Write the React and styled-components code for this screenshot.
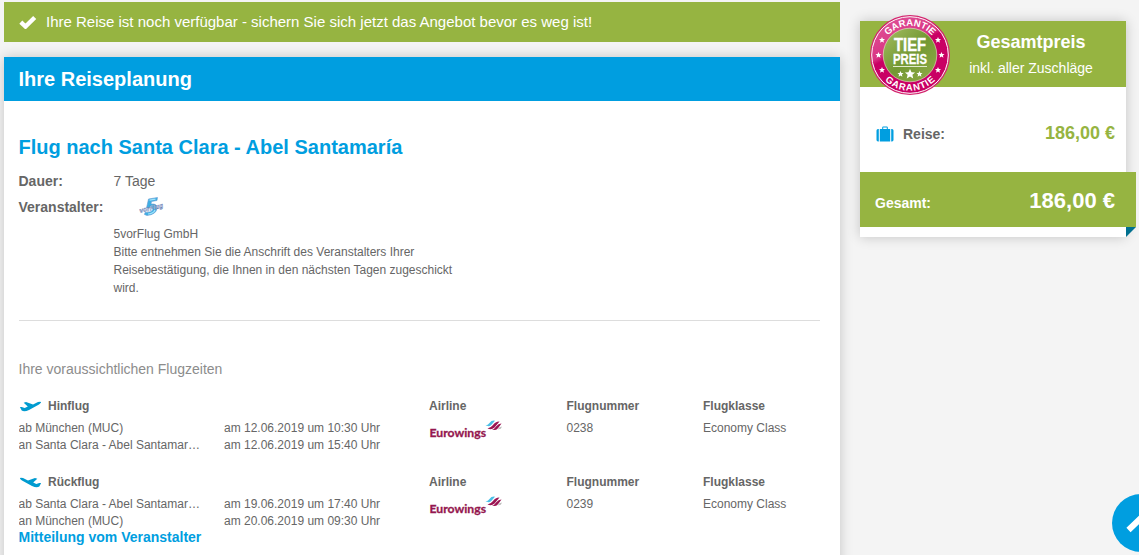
import React from 'react';
import styled, { createGlobalStyle } from 'styled-components';

const GlobalStyle = createGlobalStyle`
    body {
        background: #f4f4f4;
        color: #666;
        font-family: "Liberation Sans", Arial, sans-serif;
        margin: 0;
        overflow: hidden;
    }
`;

const Page = styled.div`
    align-items: flex-start;
    box-sizing: border-box;
    display: flex;
    gap: 20px;
    height: 555px;
    overflow: hidden;
    padding: 2px 0 0 4px;
`;

const Main = styled.main`
    width: 836px;
`;

const Notice = styled.div`
    align-items: center;
    background: #96b441;
    box-sizing: border-box;
    color: #fff;
    display: flex;
    font-size: 15px;
    gap: 9px;
    height: 40px;
    margin-bottom: 15px;
    padding: 0 0 1px 15px;
`;

const Panel = styled.section`
    background: #fff;
    box-shadow: 0 0 12px rgba(0, 0, 0, .2);
    height: 560px;
`;

const PanelTitle = styled.h1`
    background: #009ee0;
    color: #fff;
    font-size: 20px;
    line-height: 44px;
    margin: 0;
    padding-left: 14.5px;
`;

const PanelBody = styled.div`
    padding: 34px 20px 0 14.5px;
`;

const TripTitle = styled.h2`
    color: #009ee0;
    font-size: 20px;
    line-height: 24px;
    margin: 0 0 9px;
`;

const Detail = styled.div`
    display: grid;
    font-size: 14px;
    grid-template-columns: 95px 1fr;
    line-height: 26px;
`;

const Label = styled.strong`
    white-space: nowrap;
`;

const LogoBox = styled.div`
    box-sizing: border-box;
    height: 26px;
    padding: 2px 0 0 25px;

    svg {
        display: block;
    }
`;

const Address = styled.p`
    border-bottom: 1px solid #ddd;
    font-size: 12px;
    line-height: 18px;
    margin: 0;
    padding: 5px 360px 23px 95px;
`;

const TimesTitle = styled.h3`
    color: #8c8c8c;
    font-size: 14px;
    font-weight: normal;
    line-height: 20px;
    margin: 38px 0 18px;
`;

const Flight = styled.div`
    display: grid;
    font-size: 12px;
    grid-template-columns: 205.5px 205px 137.500px 136.500px 1fr;
    height: 56px;
    line-height: 17px;
    margin-bottom: ${props => props.$last ? '-1px' : '20px'};
`;

const FlightHead = styled.div`
    align-items: center;
    display: flex;
    font-weight: bold;
    gap: 7px;
    height: 18px;
    margin-bottom: 5px;
    white-space: nowrap;
`;

const Place = styled.div`
    overflow: hidden;
    text-overflow: ellipsis;
    white-space: nowrap;
    width: 182px;
`;

const Message = styled.a`
    color: #009ee0;
    display: block;
    font-size: 14px;
    font-weight: bold;
    line-height: 18px;
`;

const Sidebar = styled.aside`
    background: #fff;
    box-shadow: 0 0 12px rgba(0, 0, 0, .2);
    height: 216px;
    margin-top: 19px;
    position: relative;
    width: 266px;
`;

const SidebarHead = styled.div`
    background: #96b441;
    box-sizing: border-box;
    color: #fff;
    height: 66px;
    padding: 10px 0 0 76px;
    text-align: center;
`;

const SidebarTitle = styled.div`
    font-size: 18px;
    font-weight: bold;
    line-height: 22px;
`;

const SidebarHint = styled.div`
    font-size: 14px;
    line-height: 18px;
    margin-top: 6px;
`;

const Seal = styled.svg`
    left: 10px;
    position: absolute;
    top: -7px;
`;

const PriceRow = styled.div`
    align-items: center;
    box-sizing: border-box;
    display: flex;
    font-size: 14px;
    font-weight: bold;
    height: 85px;
    padding: 7px 11px 0 16px;

    svg {
        margin-top: 2px;
    }
`;

const PriceLabel = styled.span`
    flex: 1;
    padding: 1px 0 0 9px;
`;

const Price = styled.span`
    color: #96b441;
    font-size: 18px;
`;

const TotalRow = styled.div`
    align-items: center;
    background: #96b441;
    box-sizing: border-box;
    color: #fff;
    display: flex;
    font-size: 14px;
    font-weight: bold;
    height: 55px;
    justify-content: space-between;
    padding: 2px 21px 0 15px;
    width: 276px;
`;

const TotalLabel = styled.span`
    padding-top: 5px;
`;

const Total = styled.span`
    font-size: 22px;
`;

const Fold = styled.div`
    border-right: 10px solid transparent;
    border-top: 10px solid #00708f;
    margin-left: 266px;
    width: 0;
`;

const ToTop = styled.button`
    background: #009ee0;
    border: none;
    border-radius: 50%;
    height: 58px;
    padding: 0;
    position: fixed;
    right: -31px;
    top: 494px;
    width: 58px;

    svg {
        display: block;
    }
`;

const AirlineLogo = styled.svg`
    display: block;
    margin-top: -1px;
`;

const CheckIcon = () => (
    <svg width="18" height="14" viewBox="0 0 18 14">
        <path d="M1.800 7.200 6.500 11.500 15.700 2.500" fill="none" stroke="#fff" strokeWidth="4.400" />
    </svg>
);

const CaseIcon = () => (
    <svg width="18" height="16" viewBox="0 0 18 16" fill="#009ee0">
        <path d="M2.800 3v12.500H2A1.600 1.600 0 0 1 .5 14V4.500A1.600 1.600 0 0 1 2 3zM15.200 3v12.500h.8a1.600 1.600 0 0 0 1.500-1.500V4.500A1.600 1.600 0 0 0 16 3z" />
        <path d="M3.800 3h2.400V1.500Q6.200.5 7.200.5h3.600q1 0 1 1V3h2.400v12.500H3.800zM7.200 3h3.600V1.600H7.200z" fillRule="evenodd" />
    </svg>
);

const PlaneIcon = ({ landing }) => (
    <svg width="22.500" height="11" viewBox="-.5 0 22.500 11">
        <path
            d="M.4 6 2.200 5.900 5.200 7.100 8.300 5.600 4.200 1.800 6.500.9 13.500 3.400 18.500 1.100Q20.800.3 21.500 1 21.900 2 19.500 3.400L9.500 9.100Q4.800 11.200 2.200 9.600Z"
            fill="#009bd0"
            transform={landing ? 'translate(22 0) scale(-1 1)' : undefined}
        />
    </svg>
);

const OperatorLogo = () => (
    <svg width="27" height="22" viewBox="0 0 27 22">
        <path d="M9.500 3 18.500 1.500 18 4.500 12.500 5.500 12 8Q18.500 7.500 18 12 17.500 18.500 8 19.500L5.500 18.500 6 16.500Q13.500 16.500 14 13 14 10.500 7.500 12z" fill="#3cafe5" stroke="#6a9bd0" strokeWidth=".6" />
        <path d="M10.500 4.200 16.500 3.200M9 18Q14.500 17.500 16 14" fill="none" stroke="#a3e3fa" strokeWidth="1.200" />
        <text x="1" y="17" fontSize="6.500" fontWeight="bold" fontStyle="italic" fill="#dfe8f6" stroke="#5b75ad" strokeWidth=".4" textLength="24" transform="rotate(-14 1 17)">vorFlug</text>
    </svg>
);

const Eurowings = () => (
    <AirlineLogo width="74" height="24" viewBox="0 0 74 24">
        <text x=".5" y="17.500" fontFamily="Lato, sans-serif" fontSize="12" fontWeight="bold" fill="#94174f" stroke="#94174f" strokeWidth=".3" textLength="56.500" lengthAdjust="spacingAndGlyphs">Eurowings</text>
        <path d="M56.500 6.300Q59 6.200 60.500 4 62.500 1.200 66 1.700L62 6.200Q60 8 56.500 6.300z" fill="#4bbfe6" />
        <path d="M58.500 9.500Q61.500 9.200 64 6 66.500 2.200 70.500 2.400L65.500 8.500Q62.500 11.500 58.500 9.500z" fill="#9b1452" />
        <path d="M63 10.600Q65.500 10 67.300 7.200 69.500 4.500 72.500 4.600L69 9.200Q66.500 12 63 10.600z" fill="#9b1452" />
        <path d="M68.500 10.400Q70.500 7.800 73 7.600L71.800 9.800z" fill="#bcbcbc" />
    </AirlineLogo>
);

const STAR = 'M0-3 .9-1 3-.9 1.400.5 1.900 2.700 0 1.500-1.900 2.700-1.400.5-3-.9-.9-1Z';

const PriceSeal = () => (
    <Seal width="82" height="82" viewBox="0 0 82 82">
        <defs>
            <path id="seal-top" d="M10.700 41a29.300 29.300 0 0 1 58.600 0" />
            <path id="seal-bottom" d="M4.300 41a35.700 35.700 0 0 0 71.400 0" />
            <linearGradient id="seal-ring" x1="0" y1="0" x2=".5" y2="1">
                <stop offset="0" stopColor="#e0579a" />
                <stop offset=".46" stopColor="#d93584" />
                <stop offset=".52" stopColor="#c90064" />
            </linearGradient>
            <linearGradient id="seal-core" x1="0" y1="0" x2="1" y2="1">
                <stop offset="0" stopColor="#a5bf63" />
                <stop offset=".5" stopColor="#739833" />
                <stop offset="1" stopColor="#91ad49" />
            </linearGradient>
        </defs>
        <circle cx="40" cy="41" r="40" fill="#d3236d" />
        <circle cx="40" cy="41" r="38.300" fill="url(#seal-ring)" stroke="#fff" strokeWidth="1" />
        <circle cx="40" cy="41" r="26.800" fill="url(#seal-core)" stroke="#e7e8cf" strokeWidth=".6" />
        <g fill="#fff" fontFamily="Liberation Sans, Arial, sans-serif" fontWeight="bold" textAnchor="middle">
            <text fontSize="9.500"><textPath href="#seal-top" startOffset="50%" textLength="50">GARANTIE</textPath></text>
            <text fontSize="9.500"><textPath href="#seal-bottom" startOffset="50%" textLength="56">GARANTIE</textPath></text>
            <text x="40" y="37" fontSize="18" stroke="#fff" strokeWidth=".4" textLength="32" lengthAdjust="spacingAndGlyphs">TIEF</text>
            <text x="40" y="49.500" fontSize="14.500" stroke="#fff" strokeWidth=".3" textLength="34" lengthAdjust="spacingAndGlyphs">PREIS</text>
        </g>
        <path d="M23 52.500h34" stroke="#e3ebcf" strokeWidth="1" />
        <g fill="#fff">
            {[[12, 26], [8.500, 41], [12, 56], [68, 26], [71.500, 41], [68, 56], [30.500, 60], [49.500, 60]].map(([x, y]) => (
                <path key={`${x}-${y}`} d={STAR} transform={`translate(${x} ${y})`} />
            ))}
            <path d={STAR} transform="translate(40 60) scale(1.700)" />
        </g>
    </Seal>
);

const flights = [
    {
        title: 'Hinflug',
        from: 'ab München (MUC)',
        to: 'an Santa Clara - Abel Santamar…',
        departure: 'am 12.06.2019 um 10:30 Uhr',
        arrival: 'am 12.06.2019 um 15:40 Uhr',
        number: '0238',
    },
    {
        title: 'Rückflug',
        from: 'ab Santa Clara - Abel Santamar…',
        to: 'an München (MUC)',
        departure: 'am 19.06.2019 um 17:40 Uhr',
        arrival: 'am 20.06.2019 um 09:30 Uhr',
        number: '0239',
    },
];

const App = () => {
    return (
        <>
            <GlobalStyle />
            <Page>
                <Main>
                    <Notice>
                        <CheckIcon />
                        Ihre Reise ist noch verfügbar - sichern Sie sich jetzt das Angebot bevor es weg ist!
                    </Notice>

                    <Panel>
                        <PanelTitle>Ihre Reiseplanung</PanelTitle>
                        <PanelBody>
                            <TripTitle>Flug nach Santa Clara - Abel Santamaría</TripTitle>
                            <Detail>
                                <Label>Dauer:</Label>
                                <span>7 Tage</span>
                            </Detail>
                            <Detail>
                                <Label>Veranstalter:</Label>
                                <LogoBox><OperatorLogo /></LogoBox>
                            </Detail>
                            <Address>
                                5vorFlug GmbH<br />
                                Bitte entnehmen Sie die Anschrift des Veranstalters Ihrer
                                Reisebestätigung, die Ihnen in den nächsten Tagen zugeschickt wird.
                            </Address>

                            <TimesTitle>Ihre voraussichtlichen Flugzeiten</TimesTitle>

                            {flights.map((flight, i) =>
                                <Flight key={flight.number} $last={i === flights.length - 1}>
                                    <div>
                                        <FlightHead><PlaneIcon landing={i === 1} />{flight.title}</FlightHead>
                                        <Place>{flight.from}</Place>
                                        <Place>{flight.to}</Place>
                                    </div>
                                    <div>
                                        <FlightHead />
                                        <div>{flight.departure}</div>
                                        <div>{flight.arrival}</div>
                                    </div>
                                    <div>
                                        <FlightHead>Airline</FlightHead>
                                        <Eurowings />
                                    </div>
                                    <div>
                                        <FlightHead>Flugnummer</FlightHead>
                                        {flight.number}
                                    </div>
                                    <div>
                                        <FlightHead>Flugklasse</FlightHead>
                                        Economy Class
                                    </div>
                                </Flight>
                            )}

                            <Message>Mitteilung vom Veranstalter</Message>
                        </PanelBody>
                    </Panel>
                </Main>

                <Sidebar>
                    <SidebarHead>
                        <SidebarTitle>Gesamtpreis</SidebarTitle>
                        <SidebarHint>inkl. aller Zuschläge</SidebarHint>
                    </SidebarHead>
                    <PriceSeal />
                    <PriceRow>
                        <CaseIcon />
                        <PriceLabel>Reise:</PriceLabel>
                        <Price>186,00 €</Price>
                    </PriceRow>
                    <TotalRow>
                        <TotalLabel>Gesamt:</TotalLabel>
                        <Total>186,00 €</Total>
                    </TotalRow>
                    <Fold />
                </Sidebar>
            </Page>

            <ToTop aria-label="Nach oben">
                <svg width="58" height="58" viewBox="0 0 58 58">
                    <path d="M16.500 36 29 24 41.500 36" fill="none" stroke="#fff" strokeWidth="6" />
                </svg>
            </ToTop>
        </>
    )
}

export default App;
